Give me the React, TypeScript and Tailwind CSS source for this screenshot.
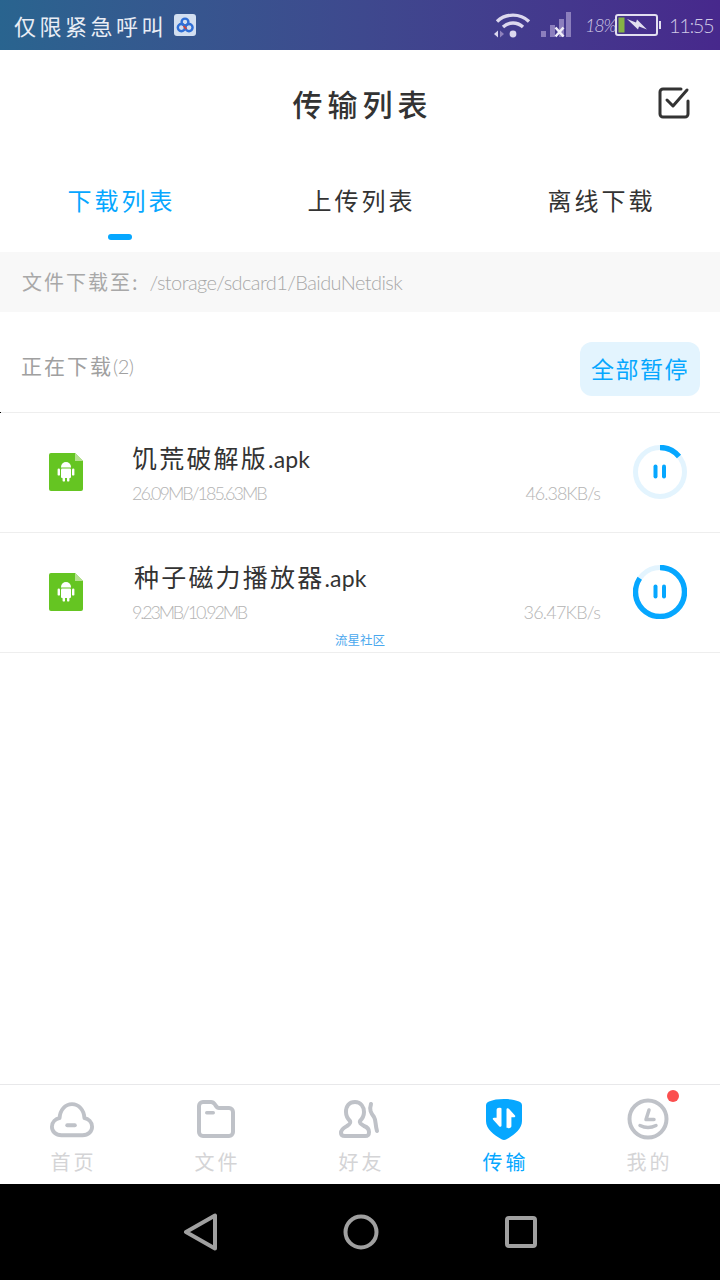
import React from "react";

const font = { fontFamily: '"Noto Sans CJK SC", "Noto Sans", sans-serif' };
const latin = { fontFamily: '"Lato", sans-serif' };

function AndroidFile() {
  return (
    <svg width="34" height="38" viewBox="0 0 34 38" className="shrink-0">
      <path d="M2 0H26L34 8V36a2 2 0 0 1-2 2H2a2 2 0 0 1-2-2V2a2 2 0 0 1 2-2Z" fill="#65c522" />
      <path d="M26 0L34 8H26Z" fill="#b5e28f" />
      <path d="M12 14a5 5 0 0 1 10 0v.6H12Z" fill="#fff" />
      <rect x="12" y="15.6" width="10" height="9.4" rx="1" fill="#fff" />
      <rect x="8.6" y="15.6" width="2.4" height="7" rx="1.2" fill="#fff" />
      <rect x="23" y="15.6" width="2.4" height="7" rx="1.2" fill="#fff" />
      <rect x="13.6" y="24" width="2.4" height="4.6" rx="1.2" fill="#fff" />
      <rect x="18" y="24" width="2.4" height="4.6" rx="1.2" fill="#fff" />
    </svg>
  );
}

function Progress({ pct }: { pct: number }) {
  const r = 24.5;
  const c = 2 * Math.PI * r;
  return (
    <svg width="54" height="54" viewBox="0 0 54 54" className="shrink-0">
      <circle cx="27" cy="27" r={r} fill="none" stroke="#e3f4fe" strokeWidth="5" />
      <circle cx="27" cy="27" r={r} fill="none" stroke="#06a7ff" strokeWidth="5.400" strokeDasharray={`${c * pct} ${c}`} transform="rotate(-90 27 27)" />
      <rect x="20.5" y="19.5" width="4" height="14" rx="2" fill="#06a7ff" />
      <rect x="29" y="19.5" width="4" height="14" rx="2" fill="#06a7ff" />
    </svg>
  );
}

function Row({ name, size, speed, pct, nameClass, sizeClass, speedClass, children }: { name: string; size: string; speed: string; pct: number; nameClass: string; sizeClass: string; speedClass: string; children?: React.ReactNode }) {
  return (
    <div className="relative flex h-[120px] items-center border-b border-[#eeeeee] pb-[2px] pl-[49px] pr-[33px]">
      <AndroidFile />
      <div className="ml-[49px] flex min-w-0 flex-1 flex-col pt-[1px]">
        <div className={`h-[34px] whitespace-nowrap text-[25px] leading-[34px] tracking-[2.2px] text-[#333333] ${nameClass}`}>
          {name}
          <span className="text-[23px] tracking-[0.2px]" style={latin}>.apk</span>
        </div>
        <div className="mt-[7px] flex items-center justify-between pr-[33px] text-[18px] font-light leading-[24px] text-[#b4b4b4]" style={latin}>
          <span className={sizeClass}>{size}</span>
          <span className={speedClass}>{speed}</span>
        </div>
      </div>
      <Progress pct={pct} />
      {children}
    </div>
  );
}

function NavItem({ label, active, children }: { label: string; active?: boolean; children: React.ReactNode }) {
  return (
    <div className="flex flex-1 flex-col items-center">
      <div className="flex h-[46px] w-[46px] items-center justify-center">{children}</div>
      <div className={`mt-[5px] pl-[3px] text-[20px] leading-[30px] tracking-[3px] ${active ? "text-[#06a7ff]" : "text-[#d4d4d6]"}`}>{label}</div>
    </div>
  );
}

export default function App() {
  return (
    <div className="flex h-[1280px] w-[720px] flex-col overflow-hidden bg-white" style={font}>
      {/* Status bar */}
      <div className="flex h-[50px] shrink-0 items-center bg-gradient-to-r from-[#29648f] to-[#47288c] pl-[14px] pr-[11px]">
        <span className="text-[22px] leading-[30px] tracking-[3.500px] text-[#e9edf5]">仅限紧急呼叫</span>
        <svg width="22" height="22" viewBox="0 0 22 22" className="ml-[7px]">
          <rect width="22" height="22" rx="3" fill="#d3dff0" />
          <circle cx="7.4" cy="13.6" r="3.6" fill="none" stroke="#2f6fd6" strokeWidth="2.4" />
          <circle cx="15" cy="13.6" r="3.6" fill="none" stroke="#2f6fd6" strokeWidth="2.4" />
          <circle cx="11" cy="8" r="3.4" fill="none" stroke="#2f6fd6" strokeWidth="2.4" />
          <path d="M9.5 12l3 3" stroke="#d0453c" strokeWidth="1.8" />
        </svg>
        <div className="ml-auto flex items-center">
          <svg width="38" height="28" viewBox="0 0 38 28">
            <path d="M3 10.5C12 2 26 2 35 10.5" fill="none" stroke="#dcd8ee" strokeWidth="3.4" />
            <path d="M9 16c6-5.4 14-5.4 20 0" fill="none" stroke="#dcd8ee" strokeWidth="3.4" />
            <circle cx="19" cy="23" r="3.4" fill="#dcd8ee" />
            <path d="M0 23l4-3.5v7Z" fill="#dcd8ee" />
            <path d="M6 19.5l4 3.5-4 3.5Z" fill="#8f82bd" />
          </svg>
          <svg width="30" height="26" viewBox="0 0 30 26" className="ml-[9px]">
            <rect x="0" y="19" width="5" height="6" fill="#8c7fbd" />
            <rect x="9" y="13" width="5" height="12" fill="#8c7fbd" />
            <rect x="18" y="7" width="5" height="18" fill="#8c7fbd" />
            <rect x="25" y="0" width="5" height="25" fill="#8c7fbd" />
            <path d="M14.5 15.5l8 9M22.5 15.5l-8 9" stroke="#f0eef8" strokeWidth="2.6" />
          </svg>
          <span className="ml-[14px] w-[29px] whitespace-nowrap text-[18px] font-light italic leading-[26px] tracking-[-1.2px] text-[#cfc9e6]" style={latin}>18%</span>
          <svg width="46" height="24" viewBox="0 0 46 24" className="ml-[1px]">
            <rect x="1" y="2" width="41" height="20" rx="2" fill="none" stroke="#e2dff0" strokeWidth="2" />
            <rect x="44" y="8" width="2" height="8" fill="#e2dff0" />
            <rect x="3.5" y="4.5" width="6" height="15" fill="#86b344" />
            <path d="M12 6l9 3.5 1-3 10 10-8-3-1 3Z" fill="#e2dff0" />
          </svg>
          <span className="ml-[8px] w-[40px] whitespace-nowrap text-[20px] font-light leading-[26px] tracking-[-1.400px] text-[#cfc9e6]" style={latin}>11:55</span>
        </div>
      </div>

      {/* Header */}
      <div className="relative flex h-[110px] shrink-0 items-center justify-center pb-[4px]">
        <h1 className="pl-[5px] text-[30px] font-medium leading-[40px] tracking-[5px] text-[#333333]">传输列表</h1>
        <svg width="34" height="34" viewBox="0 0 34 34" className="absolute right-[29px] top-[36px]">
          <path d="M24 3H6a3 3 0 0 0-3 3v22a3 3 0 0 0 3 3h22a3 3 0 0 0 3-3V15" fill="none" stroke="#333" strokeWidth="3" strokeLinecap="round" />
          <path d="M10 14l6 6L30 4" fill="none" stroke="#333" strokeWidth="3" strokeLinecap="round" strokeLinejoin="round" />
        </svg>
      </div>

      {/* Tabs */}
      <div className="flex h-[92px] shrink-0">
        {[
          { t: "下载列表", a: true },
          { t: "上传列表", a: false },
          { t: "离线下载", a: false },
        ].map((x) => (
          <div key={x.t} className="flex flex-1 flex-col items-center">
            <div className={`mt-[19px] pl-[3px] text-[24px] leading-[42px] tracking-[3px] ${x.a ? "text-[#06a7ff]" : "text-[#333333]"}`}>{x.t}</div>
            {x.a && <div className="mt-[13px] h-[6px] w-[24px] rounded-full bg-[#06a7ff]" />}
          </div>
        ))}
      </div>

      {/* Path */}
      <div className="flex h-[60px] shrink-0 items-center bg-[#f8f8f8] pl-[22px] text-[20px] text-[#a8a8a8]">
        <span className="tracking-[2px]">文件下载至:</span>
        <span className="ml-[10px] font-light tracking-[-0.600px]" style={latin}>/storage/sdcard1/BaiduNetdisk</span>
      </div>

      {/* Section header */}
      <div className="relative flex h-[101px] shrink-0 items-center justify-between border-b border-[#eeeeee] pl-[21px] pr-[20px] pt-[13px]">
        <span className="mb-[6px] whitespace-nowrap text-[21px] leading-[30px] tracking-[2px] text-[#a0a0a0]">
          正在下载<span className="text-[20px] font-light tracking-[-0.5px]" style={latin}>(2)</span>
        </span>
        <button className="flex h-[54px] w-[120px] items-center justify-center rounded-[12px] bg-[#e3f4fe] text-[23px] tracking-[1.500px] text-[#06a7ff]">全部暂停</button>
        <span className="absolute bottom-[-1px] left-0 h-px w-px bg-black" />
      </div>

      <Row name="饥荒破解版" size="26.09MB/185.63MB" speed="46.38KB/s" pct={0.14} nameClass="" sizeClass="tracking-[-2px]" speedClass="tracking-[-1px]" />
      <Row name="种子磁力播放器" size="9.23MB/10.92MB" speed="36.47KB/s" pct={0.84} nameClass="pl-[2px] mt-[-1px]" sizeClass="tracking-[-2.200px]" speedClass="tracking-[-0.8px]">
        <span className="absolute bottom-[4px] left-0 right-0 text-center text-[12.500px] leading-[16px] text-[#4aa8ee]">流星社区</span>
      </Row>

      <div className="flex-1" />

      {/* Bottom nav */}
      <div className="flex h-[100px] shrink-0 border-t border-[#e8e8ea] bg-white pt-[11px]">
        <NavItem label="首页">
          <svg width="44" height="37" viewBox="0 0 46 38">
            <path d="M12 35.5C6 35.5 2 31.5 2 26.5 2 21.5 6 18 10 17.5 10.5 9 16 3 23 3s12.5 6 13 14.5c4 .5 8 4 8 9 0 5-4 9-10 9Z" fill="none" stroke="#bfc2c8" strokeWidth="4" strokeLinejoin="round" />
            <rect x="16" y="23" width="12" height="4" rx="2" fill="#bfc2c8" />
          </svg>
        </NavItem>
        <NavItem label="文件">
          <svg width="38" height="38" viewBox="0 0 38 38">
            <path d="M6 2h8c2 0 3 1 4 2.500S20 8 22 8h10a4 4 0 0 1 4 4v20a4 4 0 0 1-4 4H6a4 4 0 0 1-4-4V6a4 4 0 0 1 4-4Z" fill="none" stroke="#bfc2c8" strokeWidth="4" strokeLinejoin="round" />
            <rect x="8" y="11" width="10" height="3.500" rx="1.700" fill="#bfc2c8" />
          </svg>
        </NavItem>
        <NavItem label="好友">
          <svg width="42" height="38" viewBox="0 0 42 38">
            <path d="M16 2c6 0 9 5 9 10 0 4-2 7-4 9-1 2 1 3 4 5 3 1 5 3 5 6 0 3-1 4-4 4H6c-3 0-4-1-4-3 0-3 2-5 6-7 3-2 4-3 3-5-2-2-4-5-4-9 0-6 3-10 9-10Z" fill="none" stroke="#bfc2c8" strokeWidth="4" strokeLinejoin="round" />
            <path d="M32 4c-2 6 0 9 3 13 2 3 1 7 3 14" fill="none" stroke="#bfc2c8" strokeWidth="4" strokeLinecap="round" />
          </svg>
        </NavItem>
        <NavItem label="传输" active>
          <svg width="36" height="41" viewBox="0 0 36 41">
            <path d="M18 0c6 0 11 .8 15 2.500 2 .8 3 2 3 4V22c0 8-8 14-15.500 18.300-1.600.9-3.400.9-5 0C8 36 0 30 0 22V6.500c0-2 1-3.200 3-4C7 .8 12 0 18 0Z" fill="#06a7ff" />
            <path d="M15.500 9.500v17c0 1.400-1.600 1.800-2.400.7L7 20.500c-.6-.9 0-1.800 1-1.800h2.600V11c0-1.300 1-2.200 2.400-2.200h.4c1.200 0 2.100.5 2.100.7Z" fill="#fff" />
            <path d="M20.500 27.500v-17c0-1.400 1.600-1.800 2.400-.7L29 16.500c.6.900 0 1.800-1 1.800h-2.600V27c0 1.300-1 2.200-2.400 2.200h-.4c-1.200 0-2.100-.5-2.100-.7Z" fill="#fff" />
          </svg>
        </NavItem>
        <NavItem label="我的">
          <svg width="42" height="42" viewBox="0 0 42 42">
            <circle cx="21" cy="21" r="18.500" fill="none" stroke="#bfc2c8" strokeWidth="4" />
            <path d="M22 12l-3 9.500h8" fill="none" stroke="#bfc2c8" strokeWidth="3.500" strokeLinecap="round" strokeLinejoin="round" />
            <path d="M13 27.500c5 2.500 11 2.500 16 0" fill="none" stroke="#bfc2c8" strokeWidth="3.500" strokeLinecap="round" />
          </svg>
        </NavItem>
        <span className="absolute left-[667px] top-[1090px] h-[12px] w-[12px] rounded-full bg-[#fb4f4f]" />
      </div>

      {/* System nav */}
      <div className="flex h-[96px] shrink-0 items-center justify-center bg-black">
        <svg width="34" height="38" viewBox="0 0 34 38" className="ml-[-1px]">
          <path d="M32 2.500V35.500L3 19Z" fill="none" stroke="#a0a0a0" strokeWidth="4" strokeLinejoin="round" />
        </svg>
        <svg width="36" height="36" viewBox="0 0 36 36" className="ml-[126px]">
          <circle cx="18" cy="18" r="15.500" fill="none" stroke="#a0a0a0" strokeWidth="4" />
        </svg>
        <svg width="32" height="32" viewBox="0 0 32 32" className="ml-[126px]">
          <rect x="2" y="2" width="28" height="28" rx="2" fill="none" stroke="#a0a0a0" strokeWidth="4" />
        </svg>
      </div>
    </div>
  );
}
